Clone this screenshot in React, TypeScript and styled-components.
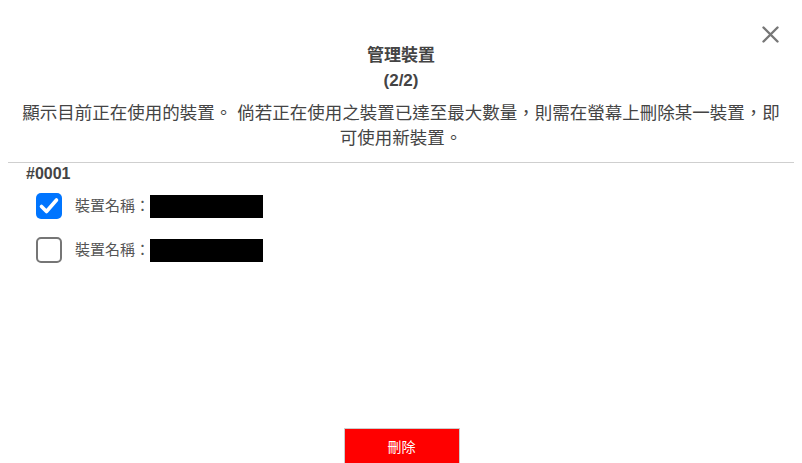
import styled, { createGlobalStyle } from "styled-components";

const Global = createGlobalStyle`
  html, body {
    margin: 0;
    padding: 0;
    background: #fff;
  }
  body {
    font-family: "Liberation Sans", "Noto Sans CJK TC", sans-serif;
    color: #444;
  }
`;

const Modal = styled.div`
  position: relative;
  width: 802px;
  height: 463px;
  overflow: hidden;
  display: flex;
  flex-direction: column;
  background: #fff;
`;

const CloseButton = styled.button`
  position: absolute;
  top: 22px;
  right: 20px;
  width: 24px;
  height: 24px;
  padding: 0;
  border: none;
  background: transparent;
  cursor: pointer;
  display: flex;
  align-items: center;
  justify-content: center;
`;

const Header = styled.div`
  padding-top: 43px;
  text-align: center;
`;

const Title = styled.div`
  font-size: 17px;
  font-weight: bold;
  line-height: 25px;
  color: #444;
`;

const Description = styled.p`
  margin: 8px 16px 11px;
  font-size: 17.5px;
  line-height: 25px;
  text-align: center;
  color: #444;
`;

const Divider = styled.hr`
  margin: 0 8px;
  border: none;
  border-top: 1px solid #cfcfcf;
`;

const Body = styled.div`
  flex: 1;
  padding: 1px 0 0 26px;
`;

const GroupTitle = styled.div`
  font-size: 16px;
  font-weight: bold;
  line-height: 20px;
  color: #444;
`;

const List = styled.div`
  display: flex;
  flex-direction: column;
  gap: 18px;
  margin-top: 9px;
  padding-left: 10px;
`;

const Row = styled.label`
  display: flex;
  align-items: center;
  height: 26px;
  gap: 13px;
  cursor: pointer;
`;

const Box = styled.span<{ $checked: boolean }>`
  box-sizing: border-box;
  width: 26px;
  height: 26px;
  border-radius: 5px;
  display: flex;
  align-items: center;
  justify-content: center;
  background: ${(p) => (p.$checked ? "#0075ff" : "#fff")};
  border: ${(p) => (p.$checked ? "none" : "2px solid #767676")};
`;

const Label = styled.span`
  display: flex;
  align-items: center;
  font-size: 15px;
  line-height: 24px;
  color: #555;
`;

const Redacted = styled.span`
  display: inline-block;
  width: 113px;
  height: 23px;
  background: #000;
`;

const Footer = styled.div`
  display: flex;
  justify-content: center;
  padding-left: 1px;
`;

const DeleteButton = styled.button`
  box-sizing: border-box;
  width: 116px;
  height: 36px;
  border: 1px solid #ccc;
  background: #ff0000;
  color: #fff;
  font-family: "Liberation Sans", "Noto Sans CJK TC", sans-serif;
  font-size: 14px;
  cursor: pointer;
  margin-bottom: -1px;
`;

const devices = [
  { id: 1, checked: true },
  { id: 2, checked: false },
];

export default function App() {
  return (
    <>
      <Global />
      <Modal>
        <CloseButton aria-label="close">
          <svg width="17" height="17" viewBox="0 0 17 17">
            <path d="M1.5 1.5 L15.5 15.5 M15.5 1.5 L1.5 15.5" stroke="#777" strokeWidth="2.4" strokeLinecap="round" />
          </svg>
        </CloseButton>
        <Header>
          <Title>管理裝置</Title>
          <Title>(2/2)</Title>
        </Header>
        <Description>
          顯示目前正在使用的裝置。 倘若正在使用之裝置已達至最大數量，則需在螢幕上刪除某一裝置，即可使用新裝置。
        </Description>
        <Divider />
        <Body>
          <GroupTitle>#0001</GroupTitle>
          <List>
            {devices.map((d) => (
              <Row key={d.id}>
                <Box $checked={d.checked}>
                  {d.checked && (
                    <svg width="26" height="26" viewBox="0 0 26 26">
                      <path d="M5.5 13.5 L10.5 18.5 L20.5 7" fill="none" stroke="#fff" strokeWidth="3.6" strokeLinecap="round" strokeLinejoin="round" />
                    </svg>
                  )}
                </Box>
                <Label>
                  裝置名稱：<Redacted />
                </Label>
              </Row>
            ))}
          </List>
        </Body>
        <Footer>
          <DeleteButton>刪除</DeleteButton>
        </Footer>
      </Modal>
    </>
  );
}
